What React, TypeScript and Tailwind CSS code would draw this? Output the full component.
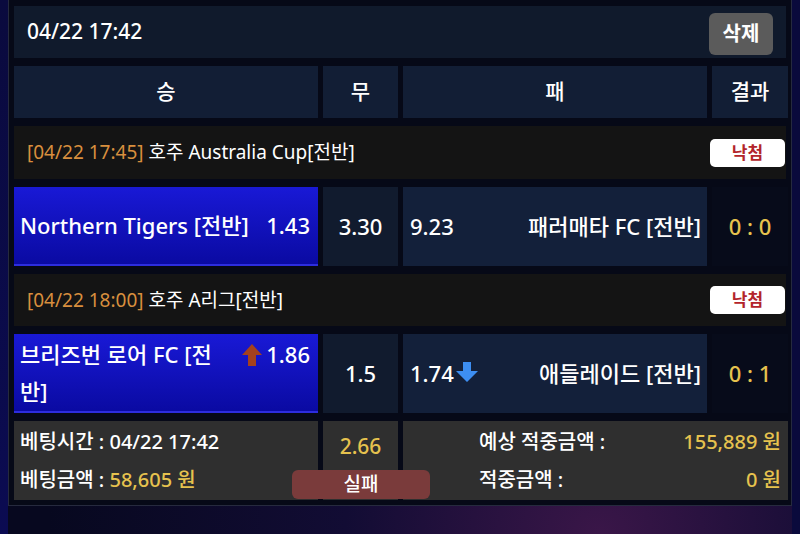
import { ReactNode } from "react";

const font = "font-['Noto_Sans','Noto_Sans_CJK_KR',sans-serif]";

type Side = { name: string; odds: string; arrow?: "up" | "down"; nameClass?: string };

type Match = {
  time: string;
  league: string;
  home: Side;
  draw: string;
  away: Side;
  score: string;
};

const matches: Match[] = [
  {
    time: "[04/22 17:45]",
    league: "호주 Australia Cup[전반]",
    home: { name: "Northern Tigers [전반]", odds: "1.43" },
    draw: "3.30",
    away: { name: "패러매타 FC [전반]", odds: "9.23" },
    score: "0 : 0",
  },
  {
    time: "[04/22 18:00]",
    league: "호주 A리그[전반]",
    home: { name: "브리즈번 로어 FC [전반]", odds: "1.86", arrow: "up", nameClass: "max-w-[206px]" },
    draw: "1.5",
    away: { name: "애들레이드 [전반]", odds: "1.74", arrow: "down" },
    score: "0 : 1",
  },
];

function UpArrow() {
  return (
    <svg width="22" height="24" viewBox="0 0 22 24" className="mt-[7px] shrink-0">
      <path d="M11 1 L21 12 L15 12 L15 23 L7 23 L7 12 L1 12 Z" fill="#a4411d" />
    </svg>
  );
}

function DownArrow() {
  return (
    <svg width="24" height="22" viewBox="0 0 24 22" className="mb-[4px] shrink-0">
      <path d="M8 1 L16 1 L16 10 L23 10 L12 21 L1 10 L8 10 Z" fill="#3d8ef2" />
    </svg>
  );
}

function Badge({ children }: { children: ReactNode }) {
  return (
    <span className="flex h-[28px] w-[75px] items-center justify-center rounded-[5px] bg-white text-[17px] font-bold text-[#b3242b]">
      {children}
    </span>
  );
}

function MatchBlock({ m, headH }: { m: Match; headH: string }) {
  return (
    <>
      <div className={`flex ${headH} items-center justify-between bg-[#141414] pl-[13px] pr-px text-[19px]`}>
        <div>
          <span className="text-[#d88f3e]">{m.time}</span>{" "}
          <span className="text-white">{m.league}</span>
        </div>
        <Badge>낙첨</Badge>
      </div>
      <div className="grid h-[79px] grid-cols-[304px_75px_304px_76px] gap-x-[5px] text-[22px] font-medium text-white">
        <div className="flex items-center border-b-2 border-[#2d2dde] bg-gradient-to-b from-[#1919d6] to-[#0a0aa2] pl-[6px] pr-[8px]">
          <div className="flex w-full items-start justify-between leading-[37px]">
            <span className={m.home.nameClass}>{m.home.name}</span>
            <span className="flex items-start gap-[3px]">
              {m.home.arrow === "up" && <UpArrow />}
              {m.home.odds}
            </span>
          </div>
        </div>
        <div className="flex items-center justify-center bg-[#111b2e]">{m.draw}</div>
        <div className="flex items-center justify-between bg-[#13203a] pl-[7px] pr-[6px]">
          <span className="flex items-center gap-[1px]">
            {m.away.odds}
            {m.away.arrow === "down" && <DownArrow />}
          </span>
          <span>{m.away.name}</span>
        </div>
        <div className="flex items-center justify-center bg-[#070b1a] text-[#e6c24e]">{m.score}</div>
      </div>
    </>
  );
}

export default function App() {
  return (
    <div
      className={`${font} relative h-[534px] w-[800px] overflow-hidden bg-[radial-gradient(ellipse_at_75%_100%,#3a1648_0%,#120c34_30%,#07081f_65%)]`}
    >
      <div className="absolute inset-y-0 left-0 w-[8px] bg-gradient-to-b from-[#0a0a3e] to-[#0b0b52]" />
      <div className="absolute inset-y-0 right-0 w-[8px] bg-[#0a0a3c]" />
      <div className="relative ml-[8px] w-[784px] border-x border-b border-[#262a3e] bg-[#060917] px-[5px] pb-[5px] pt-[6px]">
        <div className="flex flex-col gap-[8px]">
          <div className="flex h-[52px] items-center justify-between bg-[#101a2c] pl-[13px] pr-[13px]">
            <span className="text-[21px] font-medium text-white">04/22 17:42</span>
            <button className="flex h-[42px] w-[64px] translate-y-[2px] items-center justify-center rounded-[6px] bg-[#5b5b5b] text-[20px] font-semibold text-white">
              삭제
            </button>
          </div>

          <div className="grid h-[52px] grid-cols-[304px_75px_304px_76px] gap-x-[5px] text-[21px] font-medium text-white">
            <div className="flex items-center justify-center bg-[#121e35]">승</div>
            <div className="flex items-center justify-center bg-[#121e35]">무</div>
            <div className="flex items-center justify-center bg-[#121e35]">패</div>
            <div className="flex items-center justify-center bg-[#121e35]">결과</div>
          </div>

          <MatchBlock m={matches[0]} headH="h-[53px]" />
          <MatchBlock m={matches[1]} headH="h-[52px]" />

          <div className="relative grid h-[79px] grid-cols-[304px_75px_385px] gap-x-[5px] text-[20px] font-medium text-white">
            <div className="flex flex-col justify-center gap-[8px] bg-[#2f2f2f] pl-[6px]">
              <span>베팅시간 : 04/22 17:42</span>
              <span>
                베팅금액 : <span className="text-[#e6c24e]">58,605 원</span>
              </span>
            </div>
            <div className="flex justify-center bg-[#2f2f2f] pt-[10px] text-[21px] text-[#e6c24e]">2.66</div>
            <div className="flex flex-col justify-center gap-[8px] bg-[#2f2f2f] pl-[76px] pr-[7px]">
              <div className="flex justify-between">
                <span>예상 적중금액 :</span>
                <span className="text-[#e6c24e]">155,889 원</span>
              </div>
              <div className="flex justify-between">
                <span>적중금액 :</span>
                <span className="text-[#e6c24e]">0 원</span>
              </div>
            </div>
            <div className="absolute bottom-[1px] left-[278px] flex h-[29px] w-[138px] items-center justify-center rounded-[6px] bg-[#7a3b3b] text-[19px] font-medium text-white">
              실패
            </div>
          </div>
        </div>
      </div>
    </div>
  );
}
